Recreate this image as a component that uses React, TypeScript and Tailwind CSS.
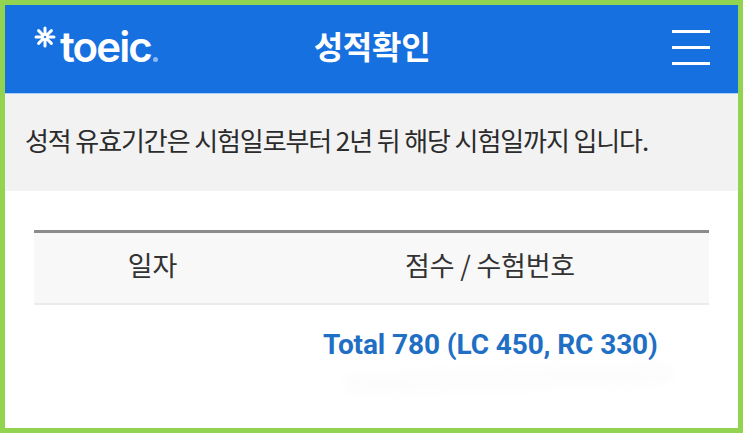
const kr = "font-['Noto_Sans_CJK_KR','Noto_Sans',sans-serif]";

function Logo() {
  return (
    <div className="flex items-start">
      <svg width="22" height="22" viewBox="0 0 22 22" className="mt-[-2px] mr-[4px]" stroke="white" strokeWidth="3" strokeLinecap="round">
        <path d="M11 2v6.500M11 13.500v6.500M2 11h6.500M13.500 11h6.500M4.600 4.600l4.600 4.600M12.800 12.800l4.600 4.600M4.600 17.400l4.600-4.600M12.800 9.200l4.600-4.600" />
      </svg>
      <span className="mt-[-5px] font-['Inter',sans-serif] text-[42px] leading-[48px] font-semibold tracking-[-1.9px] text-white">toeic</span>
      <span className="mt-[29px] ml-[2px] h-[5px] w-[5px] rounded-full bg-[#8fb8f0]" />
    </div>
  );
}

export default function App() {
  return (
    <div className={`h-[433px] w-[743px] overflow-hidden border-[5px] border-[#92d34f] bg-white ${kr}`}>
      <header className="grid h-[89px] grid-cols-[1fr_auto_1fr] items-center border-b border-[#a9d0f5] bg-[#1670e0] pr-[28px] pl-[29px]">
        <Logo />
        <h1 className="mb-[8px] text-[32px] leading-none font-bold tracking-[-0.3px] text-white">성적확인</h1>
        <div className="mb-[4px] flex w-[38px] flex-col gap-[13px] justify-self-end">
          <span className="h-[3px] bg-white" />
          <span className="h-[3px] bg-white" />
          <span className="h-[3px] bg-white" />
        </div>
      </header>
      <div className="flex h-[97px] items-center bg-[#f2f2f2] pb-[5px] pl-[20px]">
        <p className="text-[26px] leading-none tracking-[-1.1px] whitespace-nowrap text-[#2b2b2b]">
          성적 유효기간은 시험일로부터 2년 뒤 해당 시험일까지 입니다.
        </p>
      </div>
      <div className="mx-[29px] mt-[39px]">
        <div className="flex h-[75px] items-center border-t-[3px] border-b-2 border-t-[#8c8c8c] border-b-[#ebebeb] bg-[#f8f8f8] text-[27px] tracking-[-0.2px] text-[#333333]">
          <div className="w-[237px] pb-[5px] text-center">일자</div>
          <div className="flex-1 pb-[5px] text-center">점수 / 수험번호</div>
        </div>
        <div className="relative flex h-[80px] pt-[23px]">
          <div className="absolute top-[64px] left-[310px] h-[20px] w-[330px] -rotate-2 rounded-full bg-[#fcfcfc] blur-[5px]" />
          <div className="w-[237px]" />
          <div className="relative flex-1 pl-[52px] font-['Roboto',sans-serif] text-[28px] leading-[34px] font-bold tracking-[-0.1px] whitespace-nowrap text-[#1f6fc4]">
            Total 780 (LC 450, RC 330)
          </div>
        </div>
      </div>
    </div>
  );
}
